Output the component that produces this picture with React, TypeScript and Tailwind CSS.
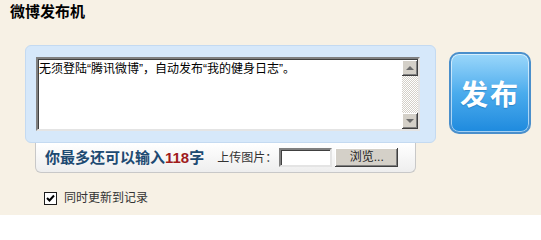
import React from "react";

const FONT = { fontFamily: '"Liberation Sans", "Noto Sans CJK SC", sans-serif' };

function ArrowBtn({ up }: { up: boolean }) {
  return (
    <div className="w-[16px] h-[16px] bg-[#d4d0c8] flex items-center justify-center shadow-[inset_-1px_-1px_0_#404040,inset_1px_1px_0_#ffffff,inset_-2px_-2px_0_#808080]">
      {up ? (
        <div className="w-0 h-0 border-l-[4px] border-r-[4px] border-b-[4px] border-l-transparent border-r-transparent border-b-[#6b6b6b]" />
      ) : (
        <div className="w-0 h-0 border-l-[4px] border-r-[4px] border-t-[4px] border-l-transparent border-r-transparent border-t-[#6b6b6b]" />
      )}
    </div>
  );
}

export default function App() {
  return (
    <div
      className="w-[541px] h-[215px] bg-[#f7f1e5] pl-[10px] pt-[4px] text-black overflow-hidden"
      style={FONT}
    >
      <div className="text-[15px] font-bold leading-[16px] h-[16px]">微博发布机</div>
      <div className="flex mt-[25px] ml-[15px]">
        <div className="w-[411px]">
          <div className="h-[98px] rounded-[6px] border border-[#c4daf1] bg-[#d6e8fa] pt-[11px] pl-[10px]">
            <div className="w-[384px] h-[74px] flex bg-white border-2 border-t-[#808080] border-l-[#808080] border-r-[#e4e4e4] border-b-[#e4e4e4] shadow-[inset_1px_1px_0_#404040]">
              <div className="flex-1 pl-[1px] pt-[3px] text-[12px] leading-[14px] whitespace-nowrap">
                无须登陆“腾讯微博”，自动发布“我的健身日志”。
              </div>
              <div className="w-[16px] flex flex-col bg-[repeating-conic-gradient(#d4d0c8_0_25%,#ffffff_0_50%)] bg-[length:2px_2px] mt-[1px]">
                <ArrowBtn up />
                <div className="flex-1" />
                <ArrowBtn up={false} />
              </div>
            </div>
          </div>
          <div className="ml-[10px] w-[381px] h-[30px] bg-gradient-to-b from-white to-[#eeeeee] border border-t-0 border-[#c8c8c8] rounded-b-[6px] flex items-center pl-[9px]">
            <span className="text-[15px] font-bold text-[#1d4a72] leading-[18px]">
              你最多还可以输入<span className="text-[#a01c1c]">118</span>字
            </span>
            <span className="ml-[13px] text-[12px] text-[#333333]">上传图片：</span>
            <div className="ml-[2px] w-[53px] h-[19px] bg-white border-2 border-t-[#808080] border-l-[#808080] border-r-[#e4e4e4] border-b-[#e4e4e4] shadow-[inset_1px_1px_0_#404040]" />
            <div className="ml-[3px] w-[63px] h-[19px] bg-[#d4d0c8] text-[12px] leading-[19px] text-center text-[#222] shadow-[inset_-1px_-1px_0_#404040,inset_1px_1px_0_#ffffff,inset_-2px_-2px_0_#808080]">
              浏览...
            </div>
          </div>
        </div>
        <div className="ml-[13px] mt-[7px] w-[82px] h-[82px] rounded-[10px] border-2 border-[#4a8fcb] bg-gradient-to-b from-[#9ad7fa] via-[#4aaced] to-[#1d8ade] shadow-[inset_0_0_0_1px_rgba(255,255,255,0.6)] flex items-center justify-center">
          <span className="text-white text-[28px] font-bold leading-none tracking-[2px] [text-shadow:0_1px_1px_rgba(0,60,120,0.3)]" style={{ fontFamily: '"Noto Sans CJK SC", sans-serif' }}>
            发布
          </span>
        </div>
      </div>
      <div className="flex items-center mt-[16px] ml-[34px]">
        <div className="w-[13px] h-[13px] bg-white border border-[#1c1c1c] flex items-center justify-center">
          <svg width="9" height="9" viewBox="0 0 9 9">
            <path d="M1 4 L3.5 6.5 L8 1.5" stroke="#000" strokeWidth="2" fill="none" />
          </svg>
        </div>
        <span className="ml-[7px] text-[12px] text-[#333333]">同时更新到记录</span>
      </div>
    </div>
  );
}
